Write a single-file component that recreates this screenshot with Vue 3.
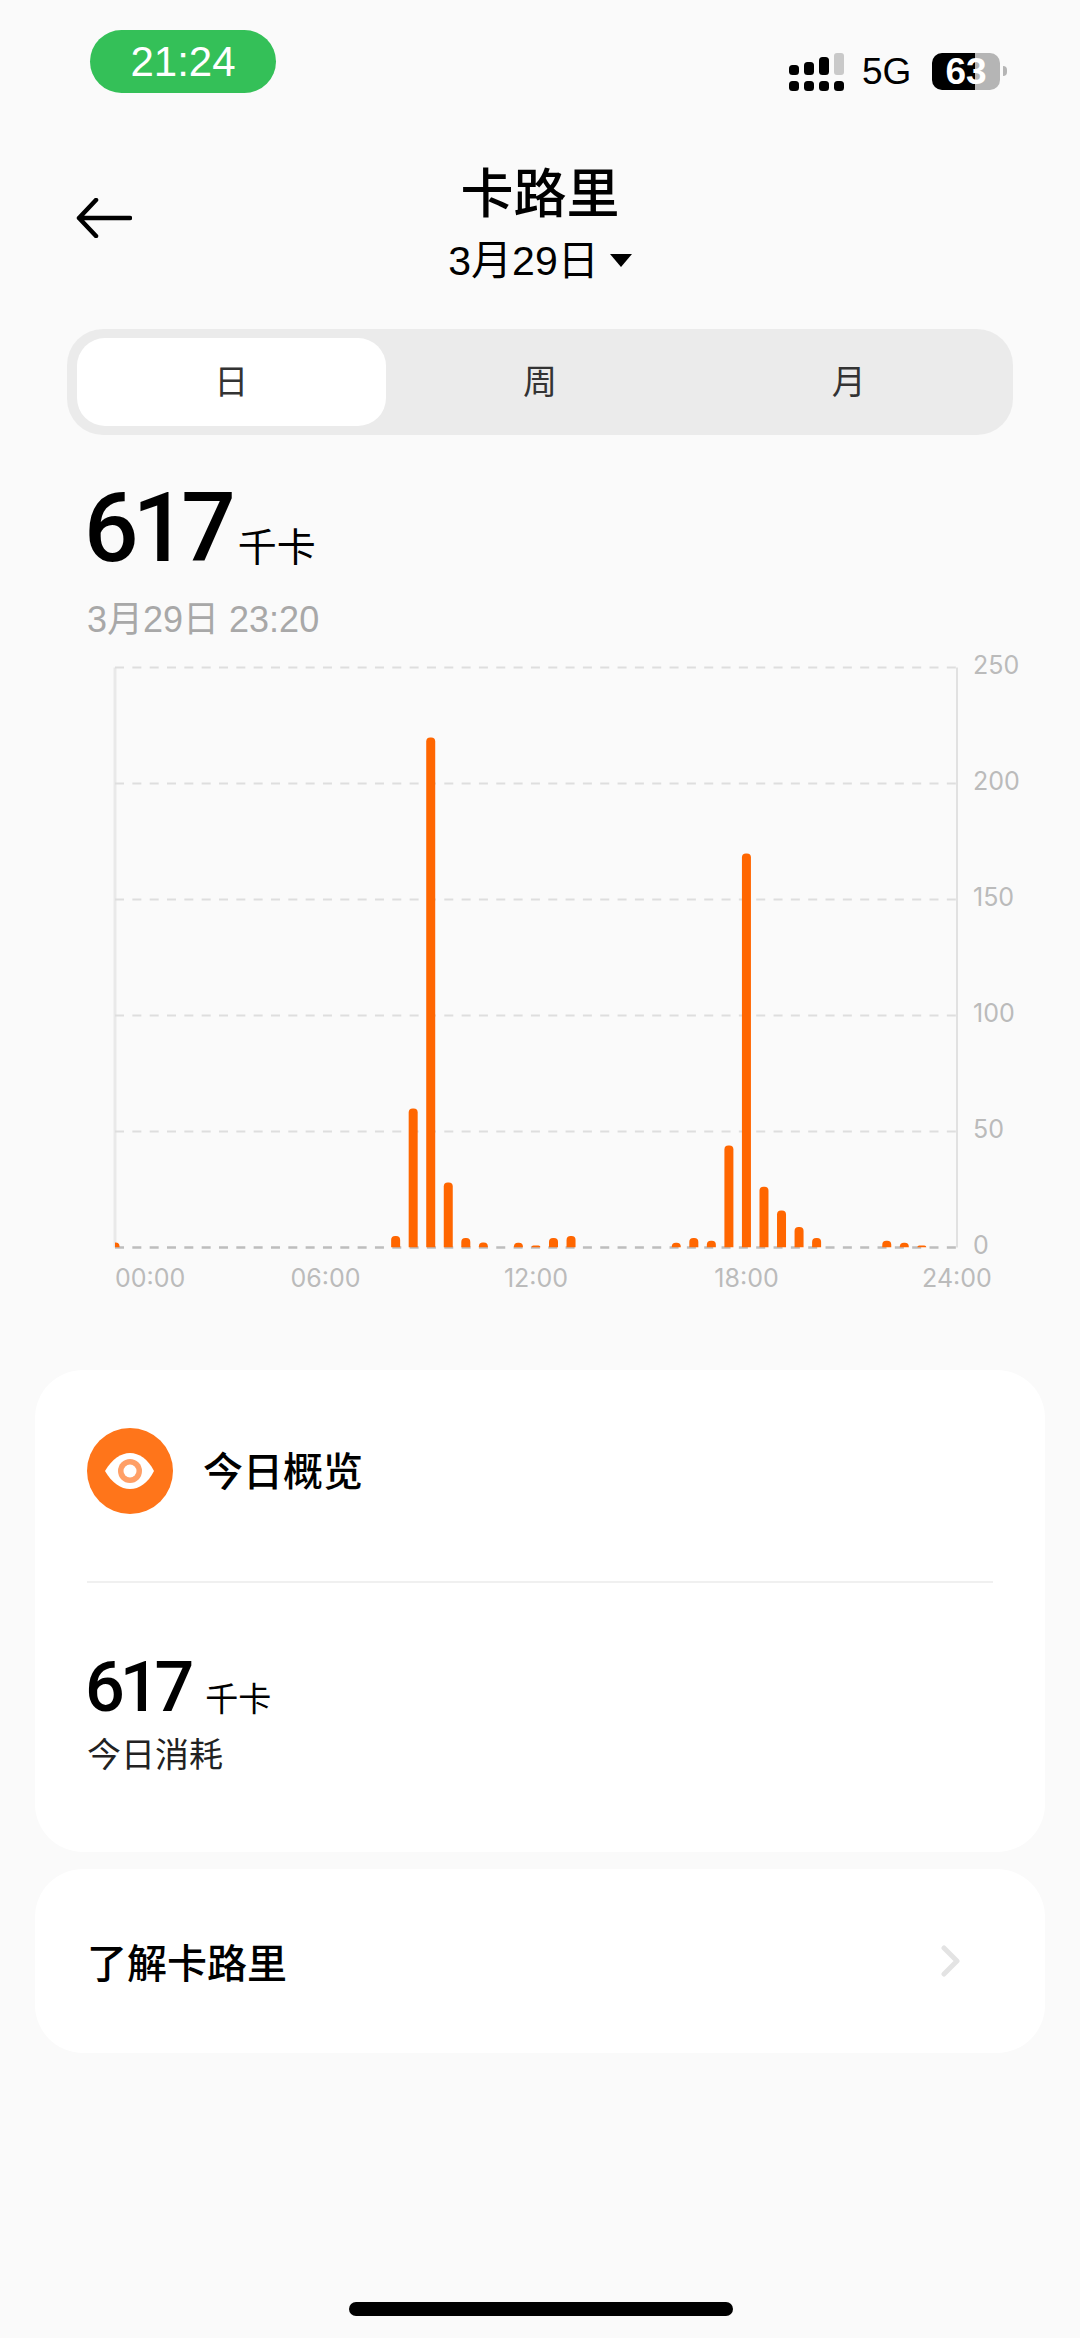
<template>
  <div class="page">
    <div class="status">
      <div class="clock">21:24</div>
      <div class="status-right">
        <svg class="signal" width="55" height="38" viewBox="0 0 55 38">
          <rect x="0" y="12" width="10" height="10" rx="3.5" />
          <rect x="15" y="9" width="10" height="13" rx="3.5" />
          <rect x="30" y="4" width="10" height="18" rx="3.5" />
          <rect x="45" y="0" width="10" height="22" rx="3" fill="#c9c9c9" />
          <rect x="0" y="28" width="10" height="10" rx="3.5" />
          <rect x="15" y="28" width="10" height="10" rx="3.5" />
          <rect x="30" y="28" width="10" height="10" rx="3.5" />
          <rect x="45" y="28" width="10" height="10" rx="3.5" />
        </svg>
        <span class="net">5G</span>
        <div class="battery"><span>63</span></div>
        <div class="battery-tip"></div>
      </div>
    </div>

    <div class="head">
      <svg class="back" width="56" height="40" viewBox="0 0 56 40">
        <path d="M20 2 L3 20 L20 38 M3 20 H54" fill="none" stroke="#000" stroke-width="4.5" stroke-linecap="round" stroke-linejoin="round" />
      </svg>
      <div class="title">卡路里</div>
      <div class="date">3月29日<i class="caret"></i></div>
    </div>

    <div class="tabs">
      <div v-for="(t, i) in tabs" :key="t" class="tab" :class="{ on: i === 0 }">{{ t }}</div>
    </div>

    <div class="total"><b>617</b><span>千卡</span></div>
    <div class="stamp">3月29日 23:20</div>

    <svg class="chart" width="1080" height="660" viewBox="0 0 1080 660">
      <line :x1="left" :y1="top" :x2="left" :y2="base" stroke="#e9e9e9" stroke-width="3" />
      <line :x1="right" :y1="top" :x2="right" :y2="base" stroke="#d9d9d9" stroke-width="1.5" />
      <line
        v-for="(v, i) in yLabels"
        :key="v"
        :x1="left"
        :x2="right"
        :y1="top + i * 116"
        :y2="top + i * 116"
        :stroke="v === 0 ? '#bdbdbd' : '#dedede'"
        :stroke-width="v === 0 ? 2.5 : 2"
        stroke-dasharray="9 8.33"
      />
      <clipPath id="plot-clip"><rect :x="left" y="0" :width="right - left" :height="base" /></clipPath>
      <g clip-path="url(#plot-clip)">
        <path v-for="b in bars" :key="b.i" :d="barPath(b)" fill="#ff6600" />
      </g>
      <text
        v-for="(v, i) in yLabels"
        :key="v"
        class="axis"
        x="973"
        :y="top + i * 116 + 6"
      >{{ v }}</text>
      <text
        v-for="(t, i) in xLabels"
        :key="t"
        class="axis"
        :x="i === 0 ? left : left + i * 210.5"
        :text-anchor="i === 0 ? 'start' : 'middle'"
        y="647"
      >{{ t }}</text>
    </svg>

    <div class="card overview">
      <div class="ov-head">
        <svg class="eye" width="86" height="86" viewBox="0 0 86 86">
          <circle cx="43" cy="43" r="43" fill="#ff751a" />
          <path d="M18 43 C25 31 34 25 43 25 C52 25 61 31 67 43 C61 55 52 61 43 61 C34 61 25 55 18 43 Z" fill="#fff" />
          <circle cx="43" cy="43" r="12" fill="#ff9f66" />
          <circle cx="43" cy="43" r="6.5" fill="#fff" />
        </svg>
        <span>今日概览</span>
      </div>
      <div class="ov-body">
        <div class="ov-num"><b>617</b><span>千卡</span></div>
        <div class="ov-label">今日消耗</div>
      </div>
    </div>

    <div class="card learn">
      <span>了解卡路里</span>
      <svg width="20" height="32" viewBox="0 0 20 32">
        <path d="M3 3 L16 16 L3 29" fill="none" stroke="#e3e3e3" stroke-width="5" stroke-linecap="round" stroke-linejoin="round" />
      </svg>
    </div>

    <div class="home"></div>
  </div>
</template>

<script setup>
const tabs = ['日', '周', '月']
const yLabels = [250, 200, 150, 100, 50, 0]
const xLabels = ['00:00', '06:00', '12:00', '18:00', '24:00']

const left = 115
const right = 957
const top = 27.5
const base = 607.5

// slot index (30 min each) and bar height in px, read off the reference
const heights = {
  0: 5, 16: 11.5, 17: 139, 18: 510, 19: 65, 20: 9.4, 21: 5, 23: 4.7, 24: 2, 25: 9.4, 26: 11.5,
  32: 4.7, 33: 9.4, 34: 6.8, 35: 102, 36: 394, 37: 60.7, 38: 37, 39: 20.5, 40: 9.4, 44: 6.8, 45: 4.7, 46: 2
}
const bars = Object.entries(heights).map(([i, h]) => ({ i: Number(i), h }))

function barPath(b) {
  const w = 9
  const x = left + b.i * 17.54 - w / 2
  const y = base - b.h
  const r = Math.min(4, b.h)
  return `M${x} ${base} V${y + r} Q${x} ${y} ${x + r} ${y} H${x + w - r} Q${x + w} ${y} ${x + w} ${y + r} V${base} Z`
}
</script>

<style scoped>
.page {
  position: relative;
  width: 1080px;
  height: 2338px;
  background: #fafafa;
  overflow: hidden;
  font-family: "Liberation Sans", "Noto Sans CJK SC", sans-serif;
  color: #000;
}

.status {
  display: flex;
  justify-content: space-between;
  padding: 30px 73px 0 90px;
  height: 100px;
  box-sizing: border-box;
}
.clock {
  width: 186px;
  height: 63px;
  border-radius: 32px;
  background: #34c058;
  color: #fff;
  font-size: 42px;
  line-height: 63px;
  text-align: center;
}
.status-right {
  display: flex;
  align-items: flex-start;
  padding-top: 23px;
}
.signal { fill: #000; }
.net {
  font-size: 37px;
  line-height: 38px;
  margin-left: 18px;
  margin-right: 20px;
  width: 50px;
}
.battery {
  width: 68px;
  height: 37px;
  border-radius: 10px;
  background: linear-gradient(90deg, #000 0 43px, #b5b5b5 43px);
  color: #fff;
  font-size: 37px;
  font-weight: 700;
  line-height: 37px;
  text-align: center;
}
.battery-tip {
  width: 4px;
  height: 10px;
  margin: 13px 0 0 3px;
  background: #b5b5b5;
  border-radius: 0 5px 5px 0;
}

.head {
  position: relative;
  height: 186px;
  padding-top: 65px;
  box-sizing: border-box;
  text-align: center;
}
.back {
  position: absolute;
  left: 76px;
  top: 98px;
}
.title {
  font-size: 53px;
  font-weight: 500;
  line-height: 60px;
}
.date {
  font-size: 41px;
  line-height: 46px;
  margin-top: 13px;
}
.caret {
  display: inline-block;
  width: 0;
  height: 0;
  border-left: 11px solid transparent;
  border-right: 11px solid transparent;
  border-top: 13px solid #000;
  margin-left: 11px;
  vertical-align: 8px;
}

.tabs {
  display: flex;
  margin: 43px 67px 0;
  height: 106px;
  padding: 9px 10px;
  box-sizing: border-box;
  background: #ebebeb;
  border-radius: 36px;
}
.tab {
  flex: 1;
  text-align: center;
  font-size: 34px;
  line-height: 88px;
  color: #333;
  border-radius: 28px;
}
.tab.on { background: #fff; }

.total {
  display: flex;
  align-items: baseline;
  margin: 48px 0 0 84px;
  height: 90px;
}
.total b {
  font-family: Roboto, "Liberation Sans", sans-serif;
  font-size: 96px;
  font-weight: 500;
  line-height: 90px;
  letter-spacing: -6px;
}
.total span {
  font-size: 39px;
  margin-left: 8px;
}
.stamp {
  margin: 27px 0 0 87px;
  font-size: 36px;
  line-height: 40px;
  color: #a8a8a8;
}

.chart { display: block; }
.axis {
  font-family: Inter, "Liberation Sans", sans-serif;
  font-size: 25px;
  fill: #bbb;
}

.card {
  margin: 0 35px;
  background: #fff;
  border-radius: 48px;
}
.overview {
  margin-top: 70px;
  height: 482px;
  padding: 58px 52px 0;
  box-sizing: border-box;
}
.ov-head {
  display: flex;
  align-items: center;
  gap: 30px;
  padding-bottom: 67px;
  border-bottom: 2px solid #f0f0f0;
  font-size: 40px;
  font-weight: 500;
}
.ov-head span { padding-bottom: 4px; }
.ov-body { padding-top: 67px; }
.ov-num {
  display: flex;
  align-items: baseline;
  margin-left: -2px;
}
.ov-num b {
  font-family: Roboto, "Liberation Sans", sans-serif;
  font-size: 70px;
  font-weight: 500;
  line-height: 74px;
  letter-spacing: -5px;
}
.ov-num span {
  font-size: 33px;
  margin-left: 16px;
}
.ov-label {
  font-size: 34px;
  line-height: 44px;
  margin-top: 9px;
  color: #222;
}

.learn {
  margin-top: 17px;
  height: 184px;
  padding: 0 84px 0 52px;
  display: flex;
  align-items: center;
  justify-content: space-between;
  font-size: 40px;
  font-weight: 500;
}

.home {
  position: absolute;
  left: 349px;
  top: 2302px;
  width: 384px;
  height: 14px;
  border-radius: 7px;
  background: #000;
}
</style>
